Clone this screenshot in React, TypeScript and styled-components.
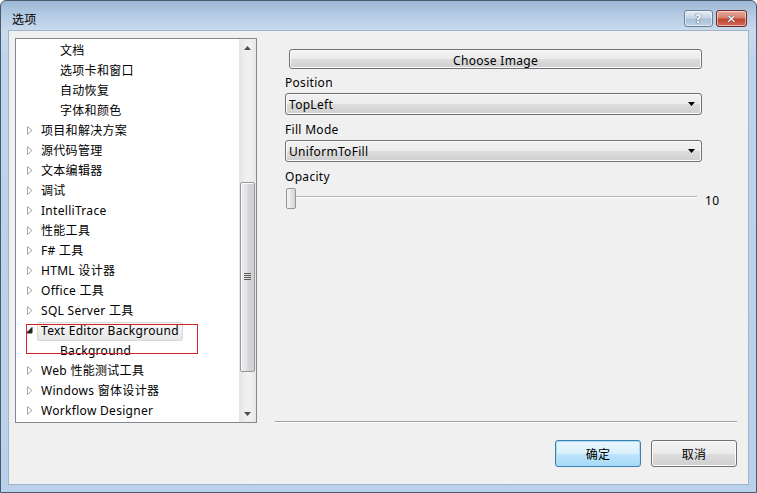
import React from "react";
import styled, { createGlobalStyle } from "styled-components";

const Global = createGlobalStyle`
  html, body { margin: 0; padding: 0; background: #ffffff; }
  body { width: 757px; height: 493px; overflow: hidden; }
  * { box-sizing: border-box; }
`;

const FONT = `"Segoe UI", "Noto Sans", "Noto Sans CJK SC", sans-serif`;

const Window = styled.div`
  width: 757px;
  height: 493px;
  display: flex;
  flex-direction: column;
  border: 1px solid #4a5a6c;
  border-radius: 6px 6px 0 0;
  background: linear-gradient(180deg, #9cb8d6 0px, #b4cbe4 14px, #c9dbee 30px, #bed4ec 60px, #b9d1ea 100%);
  font-family: ${FONT};
  font-size: 12px;
  letter-spacing: 0.3px;
  color: #000;
  overflow: hidden;
`;

const TitleBar = styled.div`
  height: 29px;
  display: flex;
  align-items: center;
  padding: 0 9px 0 11px;
`;

const Title = styled.div`
  flex: 1;
  font-size: 12px;
  padding-top: 6px;
  color: #000;
`;

const CaptionBtns = styled.div`
  display: flex;
  gap: 3px;
  align-self: flex-start;
  margin-top: 9px;
`;

const CaptionBtn = styled.div<{ $close?: boolean }>`
  width: ${(p) => (p.$close ? 31 : 29)}px;
  height: 17px;
  border-radius: 3px;
  border: 1px solid ${(p) => (p.$close ? "#6d2a2a" : "#6d7f94")};
  background: ${(p) =>
    p.$close
      ? "linear-gradient(180deg, #e8a99b 0%, #d7826f 45%, #c2452f 55%, #d1695a 100%)"
      : "linear-gradient(180deg, #e3ecf5 0%, #c6d6e8 45%, #a9c0da 55%, #bfd2e6 100%)"};
  display: flex;
  align-items: center;
  justify-content: center;
  color: #fff;
  font-weight: bold;
  font-family: "DejaVu Sans", sans-serif;
  font-size: 12px;
  text-shadow: 0 0 1px #34465a, 0 0 1px #34465a;
  box-shadow: inset 0 0 0 1px rgba(255,255,255,0.5);
`;

const Client = styled.div`
  flex: 1;
  margin: 0 7px 7px 7px;
  background: #f0f0f0;
  border: 1px solid #9fb3c9;
  display: flex;
  flex-direction: column;
  padding: 7px 11px 0 6px;
`;

const MainRow = styled.div`
  display: flex;
  height: 385px;
`;

const TreeBox = styled.div`
  position: relative;
  width: 242px;
  height: 385px;
  border: 1px solid #828790;
  background: #fff;
  display: flex;
`;

const TreeList = styled.div`
  flex: 1;
  padding-top: 1px;
  display: flex;
  flex-direction: column;
`;

const Row = styled.div<{ $level: number }>`
  height: 20px;
  display: flex;
  align-items: center;
  padding-left: ${(p) => 11 + p.$level * 19}px;
  white-space: nowrap;
`;

const Expander = styled.span`
  width: 13px;
  height: 20px;
  display: flex;
  align-items: center;
  flex-shrink: 0;
`;

const Label = styled.span<{ $selected?: boolean }>`
  height: 19px;
  display: flex;
  align-items: center;
  padding: 0 3px;
  margin-left: -3px;
  margin-top: 2px;
  border: 1px solid ${(p) => (p.$selected ? "#d9d9d9" : "transparent")};
  border-radius: 2px;
  background: ${(p) => (p.$selected ? "linear-gradient(180deg, #f7f7f7, #e6e6e6)" : "transparent")};
  padding-bottom: 2px;
`;

const RedMark = styled.div`
  position: absolute;
  left: 10px;
  top: 285px;
  width: 172px;
  height: 30px;
  border: 1px solid #d0232b;
  pointer-events: none;
`;

const ScrollBar = styled.div`
  width: 17px;
  display: flex;
  flex-direction: column;
  background: linear-gradient(90deg, #e3e3e3 0%, #f0f0f0 40%, #f0f0f0 70%, #e6e6e6 100%);
`;

const ScrollArrow = styled.div`
  height: 17px;
  display: flex;
  align-items: center;
  justify-content: center;
`;

const ScrollTrack = styled.div`
  flex: 1;
  display: flex;
  flex-direction: column;
  align-items: center;
`;

const Thumb = styled.div`
  width: 15px;
  height: 190px;
  border: 1px solid #979797;
  border-radius: 2px;
  background: linear-gradient(90deg, #eeeeee 0%, #e2e2e4 45%, #d5d5d9 55%, #cfcfd3 100%);
  box-shadow: inset 1px 1px 0 #fbfbfb;
  display: flex;
  align-items: center;
  justify-content: center;
`;

const RightPanel = styled.div`
  margin-left: 18px;
  flex: 1;
  display: flex;
  flex-direction: column;
  padding-left: 10px;
  border-bottom: 1px solid #a0a0a0;
  height: 384px;
  box-shadow: 0 1px 0 #ffffff;
`;

const GradButton = styled.div<{ $w?: number; $h?: number; $default?: boolean }>`
  width: ${(p) => (p.$w ? `${p.$w}px` : "auto")};
  height: ${(p) => p.$h ?? 20}px;
  border: 1px solid ${(p) => (p.$default ? "#3c7fb1" : "#707070")};
  border-radius: 3px;
  background: ${(p) =>
    p.$default
      ? "linear-gradient(180deg, #eaf6fd 0%, #d9f0fc 50%, #bee6fd 51%, #a7d9f5 100%)"
      : "linear-gradient(180deg, #f2f2f2 0%, #ebebeb 50%, #dddddd 51%, #cfcfcf 100%)"};
  box-shadow: inset 0 0 0 1px ${(p) => (p.$default ? "#a9dbf6" : "#fcfcfc")};
  display: flex;
  align-items: center;
  justify-content: center;
  font-size: 12px;
  color: #000;
`;

const ChooseBtn = styled(GradButton)`
  margin: 11px 0 0 4px;
  width: 413px;
  padding-top: 3px;
`;

const FieldLabel = styled.div<{ $gap?: number }>`
  margin-top: ${(p) => p.$gap ?? 6}px;
  height: 16px;
  line-height: 16px;
`;

const Combo = styled.div`
  margin-top: 2px;
  width: 417px;
  height: 22px;
  border: 1px solid #707070;
  border-radius: 3px;
  background: linear-gradient(180deg, #f2f2f2 0%, #ebebeb 50%, #dddddd 51%, #cfcfcf 100%);
  box-shadow: inset 0 0 0 1px #fcfcfc;
  display: flex;
  align-items: center;
  padding: 0 6px 0 3px;
`;

const ComboText = styled.span`
  flex: 1;
`;

const SliderRow = styled.div`
  margin-top: 2px;
  display: flex;
  align-items: center;
  height: 22px;
`;

const SliderThumb = styled.div`
  margin-left: 1px;
  width: 10px;
  height: 21px;
  border: 1px solid #959595;
  border-radius: 2px;
  background: linear-gradient(90deg, #f6f6f6 0%, #e6e6e6 50%, #d4d4d4 100%);
  flex-shrink: 0;
`;

const SliderTrack = styled.div`
  width: 401px;
  height: 2px;
  border-top: 1px solid #b5b5b5;
  border-bottom: 1px solid #ffffff;
  margin-top: -2px;
`;

const SliderValue = styled.span`
  margin-left: 8px;
  margin-top: 4px;
`;

const ButtonRow = styled.div`
  display: flex;
  justify-content: flex-end;
  gap: 10px;
  margin-top: 17px;
`;

const Collapsed = () => (
  <svg width="6" height="9" viewBox="0 0 6 9">
    <path d="M0.5 0.5 L5 4.5 L0.5 8.5 Z" fill="#fff" stroke="#a6a6a6" strokeWidth="1" />
  </svg>
);

const Expanded = () => (
  <svg width="7" height="7" viewBox="0 0 7 7" style={{ marginLeft: -1, marginTop: 1 }}>
    <path d="M6 0.5 L6 6 L0.5 6 Z" fill="#262626" stroke="#262626" strokeWidth="1" />
  </svg>
);

type Item = { text: string; level: number; state?: "c" | "e"; selected?: boolean };

const items: Item[] = [
  { text: "文档", level: 1 },
  { text: "选项卡和窗口", level: 1 },
  { text: "自动恢复", level: 1 },
  { text: "字体和颜色", level: 1 },
  { text: "项目和解决方案", level: 0, state: "c" },
  { text: "源代码管理", level: 0, state: "c" },
  { text: "文本编辑器", level: 0, state: "c" },
  { text: "调试", level: 0, state: "c" },
  { text: "IntelliTrace", level: 0, state: "c" },
  { text: "性能工具", level: 0, state: "c" },
  { text: "F# 工具", level: 0, state: "c" },
  { text: "HTML 设计器", level: 0, state: "c" },
  { text: "Office 工具", level: 0, state: "c" },
  { text: "SQL Server 工具", level: 0, state: "c" },
  { text: "Text Editor Background", level: 0, state: "e", selected: true },
  { text: "Background", level: 1 },
  { text: "Web 性能测试工具", level: 0, state: "c" },
  { text: "Windows 窗体设计器", level: 0, state: "c" },
  { text: "Workflow Designer", level: 0, state: "c" },
];

const ArrowUp = () => (
  <svg width="7" height="4" viewBox="0 0 7 4">
    <path d="M3.5 0 L7 4 L0 4 Z" fill="#4d4d4d" />
  </svg>
);
const ArrowDown = () => (
  <svg width="7" height="4" viewBox="0 0 7 4">
    <path d="M0 0 L7 0 L3.5 4 Z" fill="#4d4d4d" />
  </svg>
);
const Grip = () => (
  <svg width="7" height="8" viewBox="0 0 7 8">
    {[0, 2, 4, 6].map((y) => (
      <rect key={y} x="0" y={y} width="7" height="1" fill="#5a5a5a" />
    ))}
  </svg>
);
const ComboArrow = () => (
  <svg width="7" height="4" viewBox="0 0 7 4">
    <path d="M0 0 L7 0 L3.5 4 Z" fill="#000" />
  </svg>
);

export default function App() {
  return (
    <>
      <Global />
      <Window>
        <TitleBar>
          <Title>选项</Title>
          <CaptionBtns>
            <CaptionBtn>?</CaptionBtn>
            <CaptionBtn $close>✕</CaptionBtn>
          </CaptionBtns>
        </TitleBar>
        <Client>
          <MainRow>
            <TreeBox>
              <TreeList>
                {items.map((it) => (
                  <Row key={it.text} $level={it.level}>
                    <Expander>
                      {it.state === "c" && <Collapsed />}
                      {it.state === "e" && <Expanded />}
                    </Expander>
                    <Label $selected={it.selected}>{it.text}</Label>
                  </Row>
                ))}
              </TreeList>
              <ScrollBar>
                <ScrollArrow>
                  <ArrowUp />
                </ScrollArrow>
                <ScrollTrack>
                  <Thumb style={{ marginTop: 126 }}>
                    <Grip />
                  </Thumb>
                </ScrollTrack>
                <ScrollArrow>
                  <ArrowDown />
                </ScrollArrow>
              </ScrollBar>
              <RedMark />
            </TreeBox>
            <RightPanel>
              <ChooseBtn>Choose Image</ChooseBtn>
              <FieldLabel>Position</FieldLabel>
              <Combo>
                <ComboText>TopLeft</ComboText>
                <ComboArrow />
              </Combo>
              <FieldLabel $gap={7}>Fill Mode</FieldLabel>
              <Combo>
                <ComboText>UniformToFill</ComboText>
                <ComboArrow />
              </Combo>
              <FieldLabel $gap={7}>Opacity</FieldLabel>
              <SliderRow>
                <SliderThumb />
                <SliderTrack />
                <SliderValue>10</SliderValue>
              </SliderRow>
            </RightPanel>
          </MainRow>
          <ButtonRow>
            <GradButton $w={86} $h={27} $default>确定</GradButton>
            <GradButton $w={86} $h={27}>取消</GradButton>
          </ButtonRow>
        </Client>
      </Window>
    </>
  );
}
